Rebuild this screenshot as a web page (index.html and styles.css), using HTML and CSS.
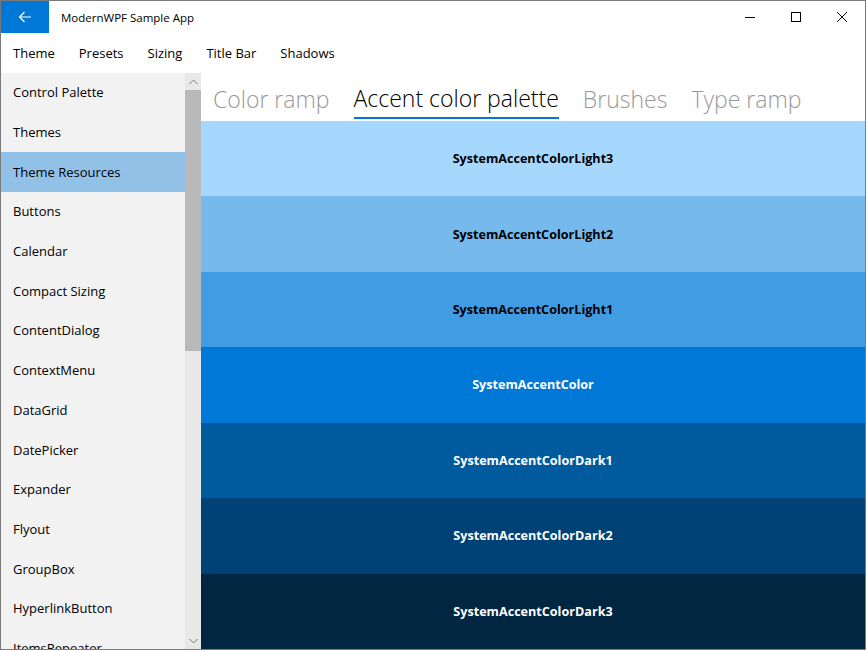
FILE: index.html
```html
<!DOCTYPE html>
<html>
<head>
<meta charset="utf-8">
<link rel="stylesheet" href="styles.css">
</head>
<body>
<div class="window">
  <div class="titlebar">
    <div class="back">
      <svg width="14" height="14" viewBox="0 0 14 14"><path d="M13 7H1.5M6.5 2L1.5 7l5 5" fill="none" stroke="#fff" stroke-width="1.2"/></svg>
    </div>
    <div class="title">ModernWPF Sample App</div>
    <div class="caption">
      <div class="cbtn"><svg width="10" height="10" viewBox="0 0 10 10"><path d="M0 5.5h10" stroke="#000" stroke-width="1"/></svg></div>
      <div class="cbtn"><svg width="10" height="10" viewBox="0 0 10 10"><rect x="0.5" y="0.5" width="9" height="9" fill="none" stroke="#000" stroke-width="1"/></svg></div>
      <div class="cbtn"><svg width="10" height="10" viewBox="0 0 10 10"><path d="M0 0L10 10M10 0L0 10" stroke="#000" stroke-width="1"/></svg></div>
    </div>
  </div>
  <div class="menubar">
    <span>Theme</span><span>Presets</span><span>Sizing</span><span>Title Bar</span><span>Shadows</span>
  </div>
  <div class="main">
    <div class="sidebar">
      <div class="list">
        <div class="item">Control Palette</div>
        <div class="item">Themes</div>
        <div class="item selected">Theme Resources</div>
        <div class="item">Buttons</div>
        <div class="item">Calendar</div>
        <div class="item">Compact Sizing</div>
        <div class="item">ContentDialog</div>
        <div class="item">ContextMenu</div>
        <div class="item">DataGrid</div>
        <div class="item">DatePicker</div>
        <div class="item">Expander</div>
        <div class="item">Flyout</div>
        <div class="item">GroupBox</div>
        <div class="item">HyperlinkButton</div>
        <div class="item">ItemsRepeater</div>
      </div>
      <div class="scrollbar">
        <div class="arrow"><svg width="9" height="6" viewBox="0 0 9 6"><path d="M0.5 5L4.5 1l4 4" fill="none" stroke="#7a7a7a" stroke-width="1"/></svg></div>
        <div class="thumb"></div>
        <div class="track"></div>
        <div class="arrow"><svg width="9" height="6" viewBox="0 0 9 6"><path d="M0.5 1L4.5 5l4-4" fill="none" stroke="#7a7a7a" stroke-width="1"/></svg></div>
      </div>
    </div>
    <div class="content">
      <div class="pivot">
        <span class="ph">Color ramp</span>
        <span class="ph active">Accent color palette</span>
        <span class="ph">Brushes</span>
        <span class="ph">Type ramp</span>
      </div>
      <div class="swatches">
        <div class="sw l3">SystemAccentColorLight3</div>
        <div class="sw l2">SystemAccentColorLight2</div>
        <div class="sw l1">SystemAccentColorLight1</div>
        <div class="sw ac">SystemAccentColor</div>
        <div class="sw d1">SystemAccentColorDark1</div>
        <div class="sw d2">SystemAccentColorDark2</div>
        <div class="sw d3">SystemAccentColorDark3</div>
      </div>
    </div>
  </div>
</div>
</body>
</html>
```
FILE: styles.css
```css
html, body { margin: 0; padding: 0; }
body { font-family: "Segoe UI", "Open Sans", sans-serif; color: #000; background: #fff; }
.window {
  width: 866px; height: 650px; box-sizing: border-box;
  border: 1px solid #7a7a7a; display: flex; flex-direction: column; overflow: hidden;
}
.titlebar { height: 32px; display: flex; align-items: center; flex: none; }
.back { width: 48px; height: 32px; background: #0078d7; display: flex; align-items: center; justify-content: center; }
.title { font-size: 11.5px; margin-left: 12px; flex: 1; }
.caption { display: flex; height: 32px; }
.cbtn { width: 46px; display: flex; align-items: center; justify-content: center; }
.menubar { height: 40px; flex: none; display: flex; align-items: center; font-size: 13px; padding-left: 12px; gap: 24px; }
.main { flex: 1; display: flex; min-height: 0; }
.sidebar { width: 200px; background: #f2f2f2; display: flex; flex: none; }
.list { flex: 1; overflow: hidden; }
.item { height: 39.7px; display: flex; align-items: center; padding-left: 12px; font-size: 13px; padding-bottom: 1px; box-sizing: border-box; }
.item.selected { background: #91c1e7; }
.scrollbar { width: 16px; background: #e8e8e8; display: flex; flex-direction: column; }
.arrow { height: 17px; display: flex; align-items: center; justify-content: center; }
.thumb { height: 261px; background: #b9b9b9; }
.track { flex: 1; }
.content { flex: 1; display: flex; flex-direction: column; }
.pivot { height: 48px; flex: none; display: flex; align-items: flex-start; padding-left: 12px; gap: 24px; }
.ph { font-size: 23px; font-weight: 300; color: #999; line-height: 40px; margin-top: 6px; border-bottom: 2px solid transparent; }
.ph.active { color: #000; border-bottom-color: #0078d7; line-height: 38px; }
.swatches { flex: 1; display: flex; flex-direction: column; }
.sw { flex: 1; display: flex; align-items: center; justify-content: center; font-size: 12.6px; font-weight: 700; }
.l3 { background: #a6d8ff; }
.l2 { background: #76b9ed; }
.l1 { background: #429ce3; }
.ac { background: #0078d7; color: #fff; }
.d1 { background: #005a9e; color: #fff; }
.d2 { background: #004275; color: #fff; }
.d3 { background: #002642; color: #fff; }
```
